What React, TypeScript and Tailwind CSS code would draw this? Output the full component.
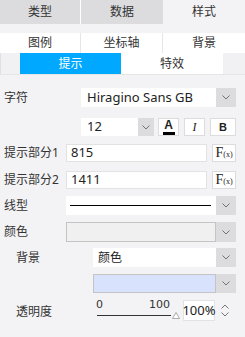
import React from "react";

const Chevron = () => (
  <svg width="8" height="5" viewBox="0 0 8 5" fill="none">
    <path d="M0.5 0.5 L4 4 L7.5 0.5" stroke="#666" strokeWidth="0.9" />
  </svg>
);

const ChevBtn = () => (
  <div className="w-[20px] self-stretch bg-[#dcdcde] flex items-center justify-center">
    <Chevron />
  </div>
);

const Fx = () => (
  <div className="w-[24px] h-[18px] bg-white border border-[#dcdcdc] flex items-center justify-center text-[#222]" style={{ fontFamily: '"Liberation Serif", serif' }}>
    <span className="flex items-baseline leading-none">
      <span className="text-[14px]">F</span>
      <span className="text-[8px]">(x)</span>
    </span>
  </div>
);

export default function App() {
  const cjk = '"Noto Sans", "Noto Sans CJK SC", sans-serif';
  return (
    <div className="w-[245px] h-[337px] bg-[#f3f3f5] text-[#333] text-[12px] overflow-hidden" style={{ fontFamily: cjk }}>
      {/* top tabs */}
      <div className="flex h-[24px]">
        <div className="w-[81px] bg-[#dcdcde] flex items-center justify-center border-r border-white">类型</div>
        <div className="w-[82px] bg-[#dcdcde] flex items-center justify-center">数据</div>
        <div className="flex-1 bg-[#f3f3f5] flex items-center justify-center">样式</div>
      </div>
      <div className="h-[9px]" />
      <div className="flex h-[20px] bg-white">
        <div className="w-[81px] flex items-center justify-center border-r border-[#e6e6e6]">图例</div>
        <div className="w-[82px] flex items-center justify-center border-r border-[#e6e6e6]">坐标轴</div>
        <div className="flex-1 flex items-center justify-center">背景</div>
      </div>
      <div className="flex h-[22px] border-b border-[#e6e6e8]">
        <div className="w-[20px] bg-[#f1f1f3] border-l border-[#e0e0e0]" />
        <div className="w-[101px] bg-[#00a8ff] text-white flex items-center justify-center">提示</div>
        <div className="w-[102px] bg-white flex items-center justify-center">特效</div>
        <div className="flex-1 bg-[#f1f1f3]" />
      </div>

      {/* form */}
      <div className="pl-[4px] pr-[9px]">
        <div className="flex items-center h-[19px] mt-[13px]">
          <div className="w-[77px]">字符</div>
          <div className="flex-1 flex h-full bg-white">
            <div className="flex-1 flex items-center pl-[6px] text-[13px] text-[#222]">Hiragino Sans GB</div>
            <ChevBtn />
          </div>
        </div>

        <div className="flex items-center h-[18px] mt-[11px] pl-[77px]">
          <div className="w-[73px] flex h-full bg-white">
            <div className="flex-1 flex items-center pl-[6px] text-[13px] text-[#222]">12</div>
            <div className="w-[16px] self-stretch bg-[#dcdcde] flex items-center justify-center"><Chevron /></div>
          </div>
          <div className="ml-[4px] w-[21px] h-full bg-white border border-[#dcdcdc] flex flex-col items-center justify-center">
            <span className="font-bold text-[12px] leading-[11px] text-[#222]" style={{ fontFamily: '"Liberation Sans", sans-serif' }}>A</span>
            <span className="w-[12px] h-[3px] bg-black mt-[1px]" />
          </div>
          <div className="ml-[5px] w-[21px] h-full bg-white border border-[#dcdcdc] flex items-center justify-center italic text-[12px] text-[#222]" style={{ fontFamily: '"Liberation Serif", serif' }}>I</div>
          <div className="ml-[5px] flex-1 h-full bg-white border border-[#dcdcdc] flex items-center justify-center font-bold text-[11px] text-[#222]" style={{ fontFamily: '"Liberation Sans", sans-serif' }}>B</div>
        </div>

        <div className="flex items-center h-[18px] mt-[8px]">
          <div className="w-[62px] whitespace-nowrap">提示部分1</div>
          <div className="w-[141px] h-full bg-white border border-[#e2e2e2] flex items-center pl-[4px] text-[13px] text-[#222]">815</div>
          <div className="ml-auto"><Fx /></div>
        </div>

        <div className="flex items-center h-[18px] mt-[9px]">
          <div className="w-[62px] whitespace-nowrap">提示部分2</div>
          <div className="w-[141px] h-full bg-white border border-[#e2e2e2] flex items-center pl-[4px] text-[13px] text-[#222]">1411</div>
          <div className="ml-auto"><Fx /></div>
        </div>

        <div className="flex items-center h-[19px] mt-[7px]">
          <div className="w-[62px]">线型</div>
          <div className="flex-1 flex h-full bg-white">
            <div className="flex-1 flex items-center pl-[4px] pr-[5px]">
              <div className="w-full h-[1px] bg-black" />
            </div>
            <ChevBtn />
          </div>
        </div>

        <div className="flex items-center h-[20px] mt-[7px]">
          <div className="w-[62px]">颜色</div>
          <div className="flex-1 flex h-full">
            <div className="flex-1 bg-[#f0f0f0] border border-[#c4c4c4]" />
            <ChevBtn />
          </div>
        </div>

        <div className="flex items-center h-[19px] mt-[6px]">
          <div className="w-[89px] pl-[12px]">背景</div>
          <div className="flex-1 flex h-full bg-white">
            <div className="flex-1 flex items-center pl-[5px] text-[#222]">颜色</div>
            <ChevBtn />
          </div>
        </div>

        <div className="flex items-center h-[19px] mt-[7px] pl-[89px]">
          <div className="flex-1 h-full bg-[#d8e2fc] border border-[#c4c4c4]" />
          <ChevBtn />
        </div>

        <div className="flex items-center h-[21px] mt-[7px]">
          <div className="w-[89px] pl-[12px] pt-[3px]">透明度</div>
          <div className="w-[90px] h-full relative">
            <span className="absolute left-[3px] top-[-1px] text-[11px] leading-none text-[#333]" style={{ fontFamily: '"DejaVu Sans", sans-serif' }}>0</span>
            <span className="absolute left-[56px] top-[-1px] text-[11px] leading-none text-[#333]" style={{ fontFamily: '"DejaVu Sans", sans-serif' }}>100</span>
            <div className="absolute left-[4px] top-[15px] w-[74px] h-[1px] bg-[#333]" />
            <svg className="absolute left-[79px] top-[12px]" width="8" height="7" viewBox="0 0 8 7">
              <path d="M4 0.5 L7.5 6.5 L0.5 6.5 Z" fill="white" stroke="#999" strokeWidth="0.8" />
            </svg>
          </div>
          <div className="w-[32px] h-full bg-white border border-[#e2e2e2] flex items-center justify-center text-[13px] text-[#222]">100%</div>
          <div className="w-[20px] h-full flex flex-col items-center justify-center gap-[3px]">
            <svg width="8" height="5" viewBox="0 0 8 5"><path d="M0.5 4.5 L4 1 L7.5 4.5" stroke="#666" strokeWidth="0.9" fill="none" /></svg>
            <Chevron />
          </div>
        </div>
      </div>
    </div>
  );
}
